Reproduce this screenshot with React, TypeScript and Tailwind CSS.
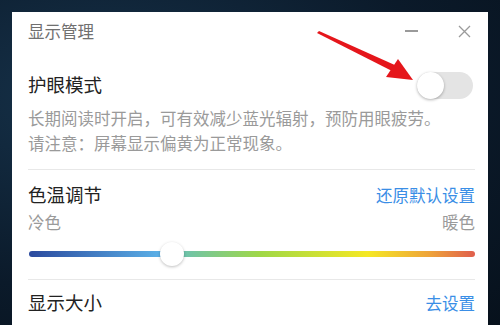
import React from 'react';

const font = { fontFamily: '"Noto Sans CJK SC", "Noto Sans", sans-serif' };

const Toggle: React.FC = () => (
  <div className="relative w-[56px] h-[27px] rounded-full bg-[#e4e4e4]">
    <div className="absolute left-0 top-0 w-[27px] h-[27px] rounded-full bg-white shadow-[0_1px_3px_rgba(0,0,0,0.3)]" />
  </div>
);

const Slider: React.FC<{ value: number }> = ({ value }) => (
  <div className="relative h-[24px] flex items-center">
    <div className="w-full h-[6px] rounded-full bg-[linear-gradient(90deg,#2b4a9e_0%,#5aaee6_29%,#6fc3aa_35%,#a0d846_52%,#f5e824_76%,#eea23a_90%,#e05e4c_100%)]" />
    <div
      className="absolute top-0 w-[24px] h-[24px] -ml-[12px] rounded-full bg-white shadow-[0_1px_3px_rgba(0,0,0,0.25)]"
      style={{ left: `${value}%` }}
    />
  </div>
);

const Divider: React.FC = () => <div className="h-px bg-[#e8e8e8]" />;

export default function App() {
  return (
    <div
      className="relative w-[500px] h-[325px] overflow-hidden bg-[radial-gradient(ellipse_at_20%_30%,#16324a_0%,#0b1a2a_60%,#07111c_100%)] pt-[12px] pl-[12px] pr-[12px]"
      style={font}
    >
      <div className="h-full bg-white pl-[16px] pr-[13px]">
        {/* header */}
        <div className="h-[38px] flex items-center justify-between">
          <span className="text-[16.5px] text-[#707070]">显示管理</span>
          <div className="flex items-center gap-[40px] pr-[4px]">
            <div className="w-[13px] h-[1.5px] bg-[#9a9a9a]" />
            <svg width="13" height="13" viewBox="0 0 13 13" stroke="#9a9a9a" strokeWidth="1.3">
              <path d="M1 1 L12 12 M12 1 L1 12" />
            </svg>
          </div>
        </div>

        {/* eye protection */}
        <div className="mt-[20px] h-[30px] flex items-center justify-between">
          <span className="text-[18.5px] text-[#222]">护眼模式</span>
          <div className="pr-[2px]">
            <Toggle />
          </div>
        </div>
        <div className="mt-[6px] text-[16.5px] leading-[24.5px] text-[#9a9a9a]">
          <p>长期阅读时开启，可有效减少蓝光辐射，预防用眼疲劳。</p>
          <p>请注意：屏幕显示偏黄为正常现象。</p>
        </div>
        <div className="mt-[14px]">
          <Divider />
        </div>

        {/* color temperature */}
        <div className="mt-[10px] h-[30px] flex items-center justify-between">
          <span className="text-[18.5px] text-[#222]">色温调节</span>
          <span className="text-[16.5px] text-[#3a8ee6]">还原默认设置</span>
        </div>
        <div className="h-[24px] flex items-center justify-between text-[16.5px] text-[#9a9a9a]">
          <span>冷色</span>
          <span>暖色</span>
        </div>
        <div className="mt-[8px] pl-[1px]">
          <Slider value={32} />
        </div>
        <div className="mt-[13px]">
          <Divider />
        </div>

        {/* display size */}
        <div className="mt-[8px] h-[30px] flex items-center justify-between">
          <span className="text-[18.5px] text-[#222]">显示大小</span>
          <span className="text-[16.5px] text-[#3a8ee6]">去设置</span>
        </div>
      </div>

      {/* annotation arrow */}
      <svg className="absolute left-0 top-0 pointer-events-none" width="500" height="325">
        <polygon points="317,33 319,31 397,66 394,72" fill="#e5161b" />
        <polygon points="413,80 386,77 398,59" fill="#e5161b" />
      </svg>
    </div>
  );
}
